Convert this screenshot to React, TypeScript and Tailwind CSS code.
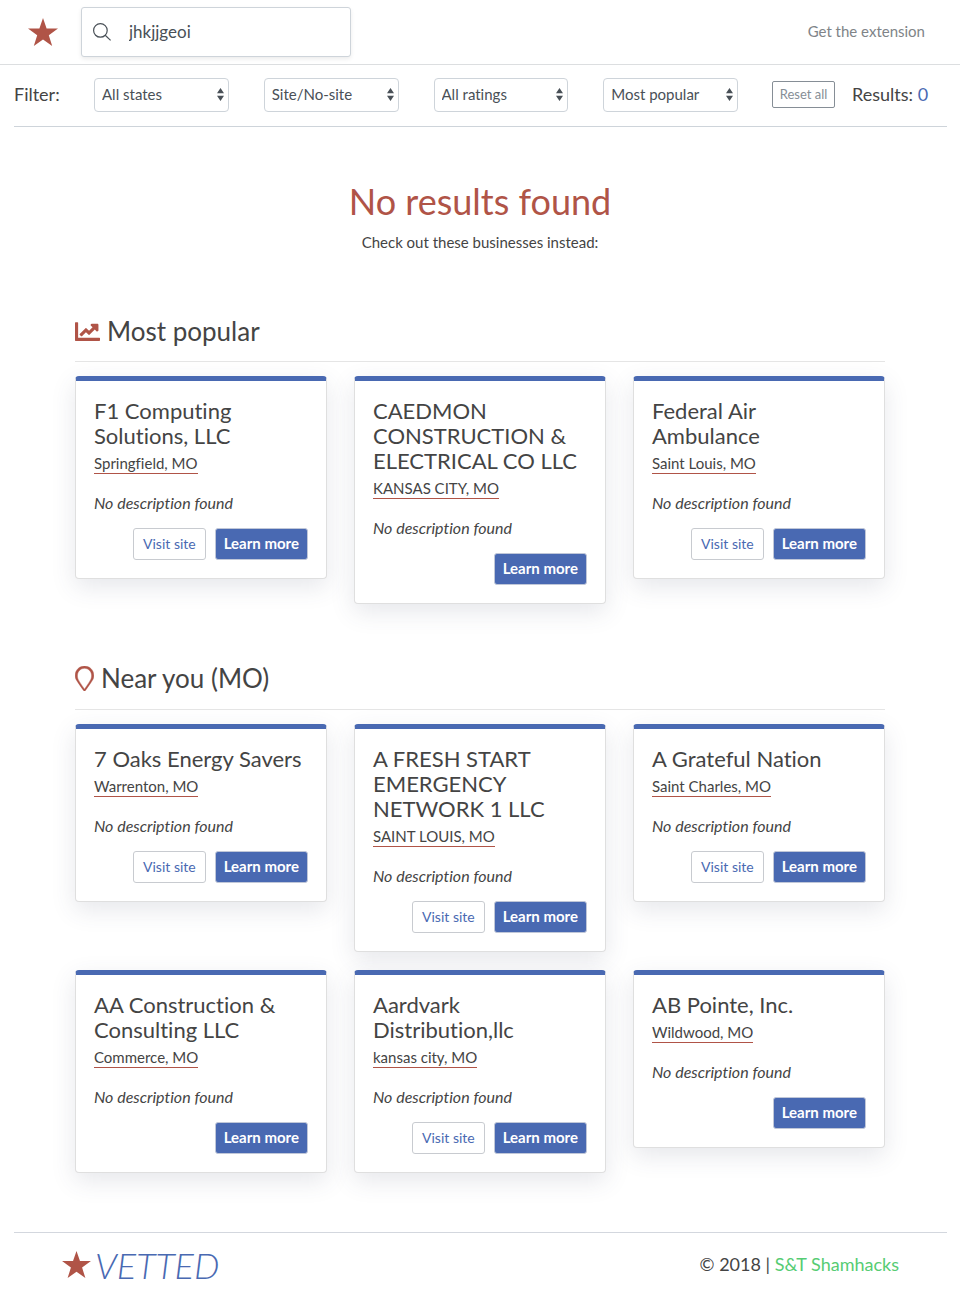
import { useState } from "react";

type Business = {
  name: string;
  location: string;
  hasSite: boolean;
};

const popular: Business[] = [
  { name: "F1 Computing\nSolutions, LLC", location: "Springfield, MO", hasSite: true },
  { name: "CAEDMON\nCONSTRUCTION &\nELECTRICAL CO LLC", location: "KANSAS CITY, MO", hasSite: false },
  { name: "Federal Air\nAmbulance", location: "Saint Louis, MO", hasSite: true },
];

const nearby: Business[] = [
  { name: "7 Oaks Energy Savers", location: "Warrenton, MO", hasSite: true },
  { name: "A FRESH START\nEMERGENCY\nNETWORK 1 LLC", location: "SAINT LOUIS, MO", hasSite: true },
  { name: "A Grateful Nation", location: "Saint Charles, MO", hasSite: true },
  { name: "AA Construction &\nConsulting LLC", location: "Commerce, MO", hasSite: false },
  { name: "Aardvark\nDistribution,llc", location: "kansas city, MO", hasSite: true },
  { name: "AB Pointe, Inc.", location: "Wildwood, MO", hasSite: false },
];

const filters = [
  { label: "State", options: ["All states", "Missouri", "Kansas", "Illinois"] },
  { label: "Website", options: ["Site/No-site", "Has site", "No site"] },
  { label: "Rating", options: ["All ratings", "4 and up", "3 and up"] },
  { label: "Sort by", options: ["Most popular", "Newest", "Name"] },
];

function Star({ className }: { className: string }) {
  return (
    <svg viewBox="0 0 30 28" className={className} fill="#b05447" aria-hidden="true">
      <path d="M15 0l3.6 10.4H30l-9.2 6.8L24.2 28 15 21.5 5.8 28l3.4-10.8L0 10.4h11.4z" />
    </svg>
  );
}

function ChartIcon() {
  return (
    <svg viewBox="0 0 512 512" className="h-[25px] w-[25px]" fill="#b05447" aria-hidden="true">
      <path d="M500 384c6.6 0 12 5.4 12 12v40c0 6.6-5.4 12-12 12H12c-6.6 0-12-5.4-12-12V76c0-6.6 5.4-12 12-12h40c6.6 0 12 5.4 12 12v308h436zM456 96H344c-21.4 0-32.1 25.9-17 41l32.9 32.9-72 72.9-55.6-55.6c-4.7-4.7-12.2-4.7-16.9 0L96.4 305c-4.7 4.6-4.8 12.2-.2 16.9l28.5 29.4c4.7 4.8 12.4 4.9 17.1.1l82.1-82.1 55.5 55.5c4.7 4.7 12.3 4.7 17 0l109.2-109.2L439 249c15.1 15.1 41 4.4 41-17V120c0-13.3-10.7-24-24-24z" />
    </svg>
  );
}

function PinIcon() {
  return (
    <svg viewBox="0 0 384 512" className="h-[25px] w-[19px]" fill="#b05447" stroke="#b05447" strokeWidth="8" aria-hidden="true">
      <path d="M192 0C85.961 0 0 85.961 0 192c0 77.413 26.97 99.031 172.268 309.67 9.534 13.772 29.929 13.774 39.465 0C357.03 291.031 384 269.413 384 192 384 85.961 298.039 0 192 0zm0 473.931C52.705 272.488 48 256.494 48 192c0-38.463 14.979-74.625 42.177-101.823S153.536 48 192 48s74.625 14.979 101.823 42.177S336 153.538 336 192c0 64.49-4.706 80.49-144 281.931z" />
    </svg>
  );
}

function FilterSelect({ label, options }: { label: string; options: string[] }) {
  return (
    <div className="relative min-w-0 flex-1">
      <select
        aria-label={label}
        className="block h-[34px] w-full appearance-none rounded border border-[#ced4da] bg-white pr-5 pl-[7px] text-[15px] text-[#495057]"
      >
        {options.map((option) => (
          <option key={option}>{option}</option>
        ))}
      </select>
      <svg
        viewBox="0 0 7 13"
        className="pointer-events-none absolute top-[10px] right-[5px] h-[13px] w-[7px]"
        fill="#495057"
        aria-hidden="true"
      >
        <path d="M3.5 0L7 5.3H0zM3.5 13L0 7.7h7z" />
      </svg>
    </div>
  );
}

function BusinessCard({ name, location, hasSite }: Business) {
  return (
    <article className="rounded border border-t-[5px] border-[#dfdfdf] border-t-[#4969b2] bg-white px-[18px] pt-[17px] pb-[18px] shadow-[0_8px_24px_rgba(60,70,100,0.13)]">
      <h3 className="text-[22px] leading-[25px] whitespace-pre-line">{name}</h3>
      <div className="flex pt-[6px]">
        <span className="border-b border-[#b05447] text-[15px] leading-[19px]">{location}</span>
      </div>
      <p className="pt-[18px] text-[16px] leading-[22px] italic">No description found</p>
      <div className="flex justify-end gap-[9px] pt-[14px]">
        {hasSite && (
          <button className="h-8 rounded-[3px] border border-[#c8cbd0] bg-white px-[9px] pb-[2px] text-[14px] text-[#4969b2]">
            Visit site
          </button>
        )}
        <button className="h-8 rounded-[3px] border border-[#c0c7d8] bg-[#4969b2] px-2 pb-[2px] text-[15px] font-bold text-white">
          Learn more
        </button>
      </div>
    </article>
  );
}

function CardGrid({ items }: { items: Business[] }) {
  return (
    <div className="mt-[14px] grid grid-cols-3 items-start gap-x-[27px] gap-y-[18px]">
      {items.map((item) => (
        <BusinessCard key={item.name} {...item} />
      ))}
    </div>
  );
}

export default function App() {
  const [query, setQuery] = useState("jhkjjgeoi");

  return (
    <div className="bg-white font-['Lato',sans-serif] text-[#444444] [font-variant-ligatures:none]">
      <header className="flex h-[65px] items-center border-b border-[#dcdee0] pr-[35px] pl-7">
        <a href="#" aria-label="Vetted home">
          <Star className="h-7 w-[30px]" />
        </a>
        <label className="ml-[23px] flex h-[50px] w-[270px] items-center rounded-[3px] border border-[#ced4da] bg-white pl-[11px] shadow-[0_2px_4px_rgba(0,0,0,0.08)]">
          <svg viewBox="0 0 18 18" className="h-[18px] w-[18px] shrink-0" fill="none" stroke="#495057" strokeWidth="1.2" aria-hidden="true">
            <circle cx="7.4" cy="7.4" r="6.8" />
            <path d="M12.2 12.2L17.6 17.4" />
          </svg>
          <input
            aria-label="Search businesses"
            value={query}
            onChange={(event) => setQuery(event.target.value)}
            className="ml-[18px] min-w-0 flex-1 text-[17px] text-[#495057] outline-none"
          />
        </label>
        <a href="#" className="ml-auto pb-[2px] text-[15px] text-[#808488]">
          Get the extension
        </a>
      </header>

      <div className="mr-[13px] ml-[14px] flex h-[62px] items-center border-b border-[#ced4da] pb-[2px]">
        <span className="w-20 text-[18px]">Filter:</span>
        <div className="flex flex-1 gap-[35px]">
          {filters.map((filter) => (
            <FilterSelect key={filter.label} {...filter} />
          ))}
        </div>
        <button className="ml-[34px] h-[27px] w-[63px] rounded-[2px] border border-[#868e96] text-[13px] text-[#868e96]">
          Reset all
        </button>
        <p className="ml-[17px] w-[95px] text-[18px]">
          Results: <span className="text-[#4969b2]">0</span>
        </p>
      </div>

      <main className="px-[75px]">
        <div className="pt-[49px] text-center">
          <h1 className="text-[36px] leading-[50px] text-[#b05447]">No results found</h1>
          <p className="pt-[5px] text-[15px] leading-[22px]">Check out these businesses instead:</p>
        </div>

        <section className="pt-[59px]">
          <h2 className="flex h-[50px] items-center gap-[7px] border-b border-[#e5e5e5] pb-[10px] text-[26px]">
            <ChartIcon />
            Most popular
          </h2>
          <CardGrid items={popular} />
        </section>

        <section className="pt-[56px]">
          <h2 className="flex h-[50px] items-center gap-[7px] border-b border-[#e5e5e5] pb-[12px] text-[26px]">
            <PinIcon />
            Near you (MO)
          </h2>
          <CardGrid items={nearby} />
        </section>
      </main>

      <footer className="mt-[59px] mr-[13px] ml-[14px] flex h-[73px] items-center justify-between border-t border-[#d3d7de] pr-12 pb-[9px] pl-12">
        <a href="#" className="flex items-center gap-1" aria-label="Vetted">
          <Star className="h-[27px] w-[29px]" />
          <span className="text-[36px] leading-[40px] font-light text-[#4969b2] italic">VETTED</span>
        </a>
        <p className="text-[18px]">
          © 2018 |{" "}
          <a href="#" className="text-[#56cc73]">
            S&amp;T Shamhacks
          </a>
        </p>
      </footer>
    </div>
  );
}
